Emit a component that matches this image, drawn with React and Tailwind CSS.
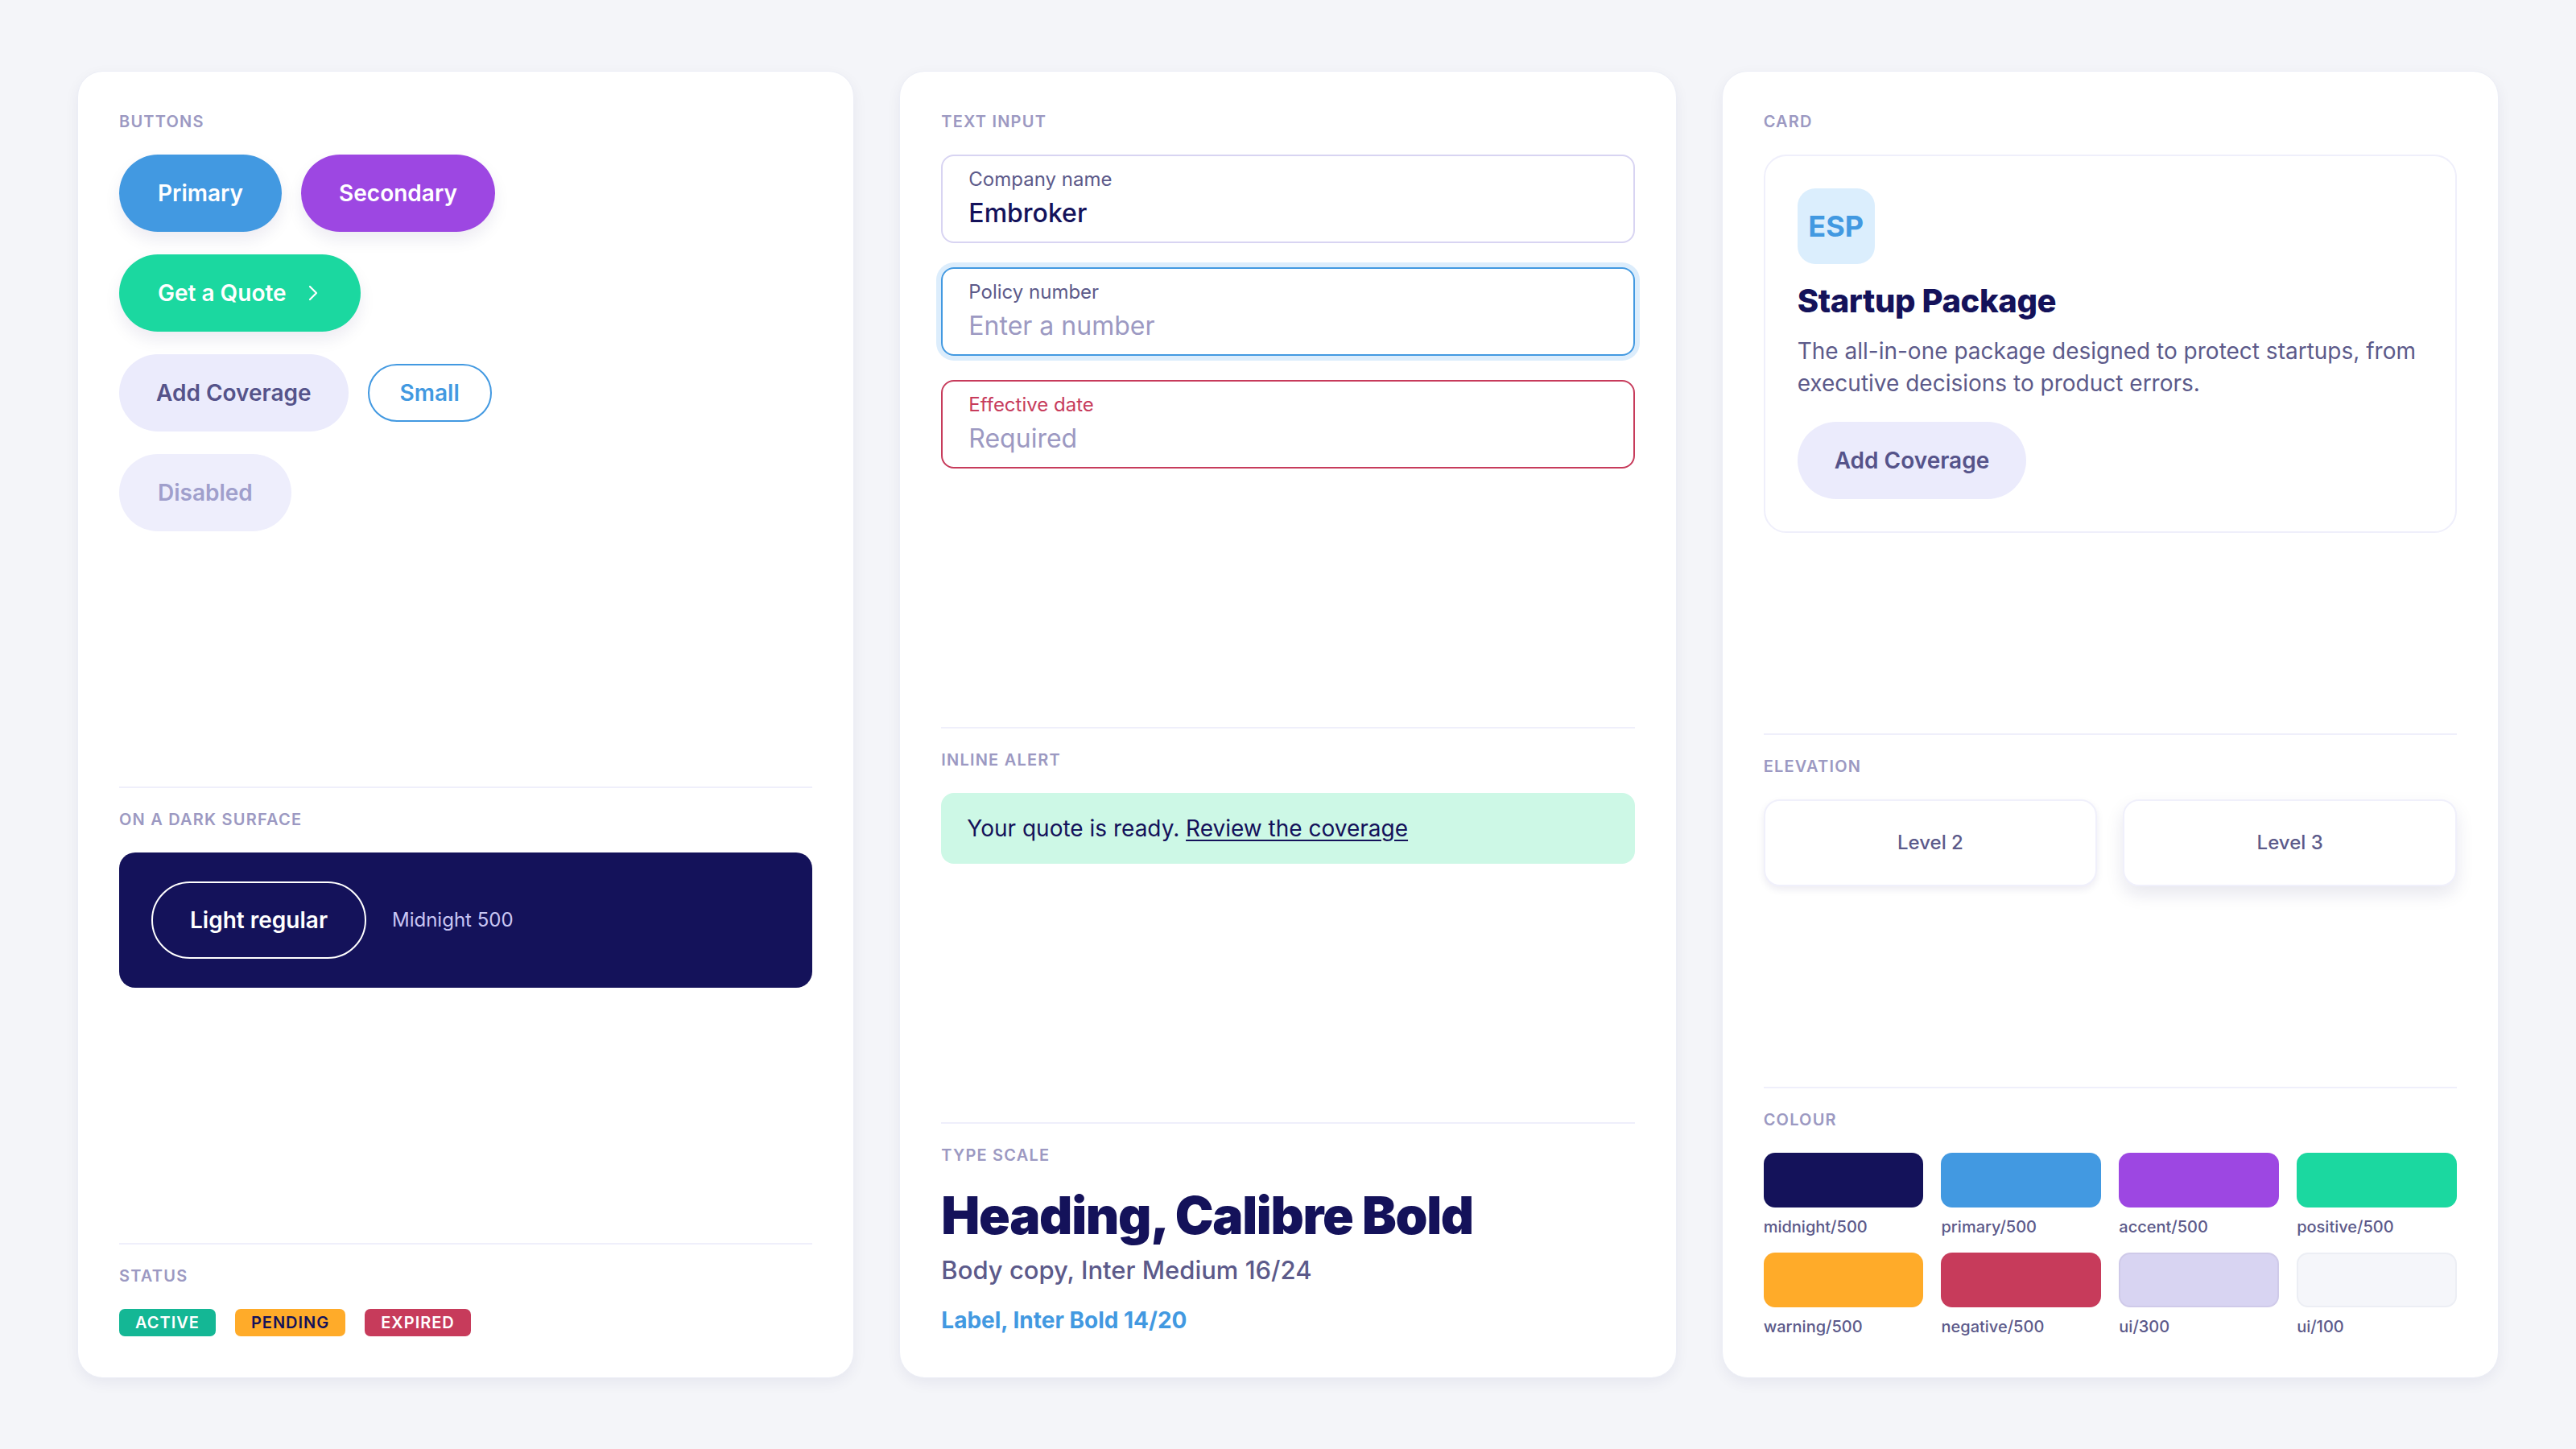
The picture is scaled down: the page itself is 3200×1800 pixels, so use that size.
import React from 'react';

const font = { fontFamily: 'Inter, "Noto Sans", sans-serif' };

const SectionLabel = ({ children }) => (
    <div className="text-[20px] leading-[22px] font-semibold tracking-[0.06em] uppercase text-[#9c99c2] mb-[30px]">
        {children}
    </div>
);

// grow: section takes a share of the free height; top: draws the divider above it
const Section = ({ label, grow, top, children }) => (
    <section className={`${grow ? 'grow' : ''} ${top ? 'border-t-2 border-[#efeffb] pt-7' : ''}`}>
        <SectionLabel>{label}</SectionLabel>
        {children}
    </section>
);

const Panel = ({ children }) => (
    <div className="flex flex-col rounded-[32px] bg-white border border-[#eceef6] p-[51px] shadow-[0_6px_18px_rgba(20,18,90,0.06)]">
        {children}
    </div>
);

const ChevronRight = () => (
    <svg width="14" height="20" viewBox="0 0 14 20" fill="none" className="ml-[26px]">
        <path d="M3 2l8 8-8 8" stroke="currentColor" strokeWidth="2.2" strokeLinecap="round" strokeLinejoin="round" />
    </svg>
);

const Buttons = () => (
    <div className="flex flex-col items-start gap-7">
        <div className="flex gap-6">
            <button className="h-[96px] px-12 rounded-full bg-[#4299e1] text-white text-[28px] font-semibold shadow-[0_10px_20px_rgba(20,18,90,0.08)]">
                Primary
            </button>
            <button className="h-[96px] px-[47px] rounded-full bg-[#9d47e2] text-white text-[28px] font-semibold shadow-[0_10px_20px_rgba(20,18,90,0.08)]">
                Secondary
            </button>
        </div>
        <button className="h-[96px] pl-12 pr-[52px] rounded-full bg-[#1bd8a0] text-white text-[28px] font-semibold flex items-center shadow-[0_10px_20px_rgba(20,18,90,0.08)]">
            Get a Quote
            <ChevronRight />
        </button>
        <div className="flex items-center gap-6">
            <button className="h-[96px] px-[46px] rounded-full bg-[#ebebfc] text-[#55538a] text-[28px] font-semibold">
                Add Coverage
            </button>
            <button className="h-[72px] px-[38px] rounded-full border-2 border-[#4299e1] text-[#4299e1] text-[28px] font-semibold">
                Small
            </button>
        </div>
        <button disabled className="h-[96px] px-12 rounded-full bg-[#eeeefc] text-[#a09fcc] text-[28px] font-semibold">
            Disabled
        </button>
    </div>
);

const statuses = [
    { text: 'Active', cls: 'bg-[#14b795] text-white' },
    { text: 'Pending', cls: 'bg-[#ffab29] text-[#14125a]' },
    { text: 'Expired', cls: 'bg-[#c73b5b] text-white' },
];

const Field = ({ label, value, placeholder, state }) => {
    const box = state === 'focus'
        ? 'border-[#4299e1] ring-[6px] ring-[#dcedfc]'
        : state === 'error'
            ? 'border-[#c73b5b]'
            : 'border-[#d8d4f2]';
    return (
        <label className={`block h-[110px] rounded-[16px] border-2 px-[32px] py-[15px] ${box}`}>
            <div className={`text-[24px] leading-[28px] ${state === 'error' ? 'text-[#c73b5b]' : 'text-[#5c5a8a]'}`}>{label}</div>
            <input
                readOnly
                defaultValue={value}
                placeholder={placeholder}
                className="mt-2 block w-full h-[40px] bg-transparent outline-none text-[32px] leading-[40px] font-medium text-[#14125a] placeholder:text-[#9c99c2] placeholder:font-normal"
            />
        </label>
    );
};

const swatches = [
    { name: 'midnight/500', cls: 'bg-[#14125a]' },
    { name: 'primary/500', cls: 'bg-[#4299e1]' },
    { name: 'accent/500', cls: 'bg-[#9d47e2]' },
    { name: 'positive/500', cls: 'bg-[#1bd8a0]' },
    { name: 'warning/500', cls: 'bg-[#ffab29]' },
    { name: 'negative/500', cls: 'bg-[#c73b5b]' },
    { name: 'ui/300', cls: 'bg-[#d8d4f2] border-2 border-[#cfcae9]' },
    { name: 'ui/100', cls: 'bg-[#f5f6fa] border-2 border-[#eceef4]' },
];

export default function App() {
    return (
        <div style={font} className="h-[1800px] bg-[#f4f5f9] px-[96px] py-[88px] grid grid-cols-3 gap-[56px]">
            {/* Controls */}
            <Panel>
                <Section label="Buttons" grow>
                    <Buttons />
                </Section>
                <Section label="On a dark surface" grow top>
                    <div className="h-[168px] rounded-[20px] bg-[#14125a] px-10 flex items-center gap-8">
                        <button className="h-[96px] px-[46px] rounded-full border-2 border-white text-white text-[28px] font-semibold">
                            Light regular
                        </button>
                        <span className="text-[24px] text-[#c9c6f4]">Midnight 500</span>
                    </div>
                </Section>
                <Section label="Status" top>
                    <div className="flex gap-6">
                        {statuses.map((s) => (
                            <span key={s.text} className={`h-[34px] px-5 rounded-[7px] flex items-center text-[20px] font-semibold uppercase tracking-[0.05em] ${s.cls}`}>
                                {s.text}
                            </span>
                        ))}
                    </div>
                </Section>
            </Panel>

            {/* Forms & type */}
            <Panel>
                <Section label="Text input" grow>
                    <div className="flex flex-col gap-[30px]">
                        <Field label="Company name" value="Embroker" />
                        <Field label="Policy number" placeholder="Enter a number" state="focus" />
                        <Field label="Effective date" placeholder="Required" state="error" />
                    </div>
                </Section>
                <Section label="Inline alert" grow top>
                    <div className="h-[88px] rounded-[16px] bg-[#cdf8e6] px-8 flex items-center text-[28px] text-[#14125a]">
                        <span>
                            Your quote is ready.{' '}
                            <a href="#" className="underline underline-offset-4">Review the coverage</a>
                        </span>
                    </div>
                </Section>
                <Section label="Type scale" top>
                    <div className="-mt-[2px] text-[64px] leading-[72px] font-black tracking-[-0.02em] text-[#14125a]">
                        Heading, Calibre Bold
                    </div>
                    <div className="mt-2 text-[31px] leading-[48px] font-medium text-[#5c5a8a]">
                        Body copy, Inter Medium 16/24
                    </div>
                    <div className="mt-[18px] text-[28px] leading-[40px] font-bold text-[#4299e1]">
                        Label, Inter Bold 14/20
                    </div>
                </Section>
            </Panel>

            {/* Surfaces & colour */}
            <Panel>
                <Section label="Card" grow>
                    <div className="rounded-[28px] border-2 border-[#efeffb] p-10">
                        <div className="w-[96px] h-[94px] rounded-[22px] bg-[#dbeefd] flex items-center justify-center text-[36px] font-bold text-[#4299e1]">
                            ESP
                        </div>
                        <h3 className="mt-6 text-[40px] leading-[44px] font-extrabold tracking-[-0.01em] text-[#14125a]">Startup Package</h3>
                        <p className="mt-5 text-[28px] leading-[40px] text-[#5c5a8a]">
                            The all-in-one package designed to protect startups, from executive decisions to product errors.
                        </p>
                        <button className="mt-7 h-[96px] px-[46px] rounded-full bg-[#ebebfc] text-[#55538a] text-[28px] font-semibold">
                            Add Coverage
                        </button>
                    </div>
                </Section>
                <Section label="Elevation" grow top>
                    <div className="grid grid-cols-2 gap-8">
                        <div className="h-[108px] rounded-[20px] border-2 border-[#f0f0fb] bg-white flex items-center justify-center text-[24px] font-medium text-[#5c5a8a] shadow-[0_4px_10px_rgba(20,18,90,0.08)]">
                            Level 2
                        </div>
                        <div className="h-[108px] rounded-[20px] border-2 border-[#f0f0fb] bg-white flex items-center justify-center text-[24px] font-medium text-[#5c5a8a] shadow-[0_10px_22px_rgba(20,18,90,0.1)]">
                            Level 3
                        </div>
                    </div>
                </Section>
                <Section label="Colour" top>
                    <div className="grid grid-cols-4 gap-x-[22px] gap-y-5">
                        {swatches.map((s) => (
                            <div key={s.name}>
                                <div className={`h-[68px] rounded-[14px] ${s.cls}`} />
                                <div className="mt-3 text-[20px] leading-[24px] font-medium text-[#5c5a8a]">{s.name}</div>
                            </div>
                        ))}
                    </div>
                </Section>
            </Panel>
        </div>
    );
}
